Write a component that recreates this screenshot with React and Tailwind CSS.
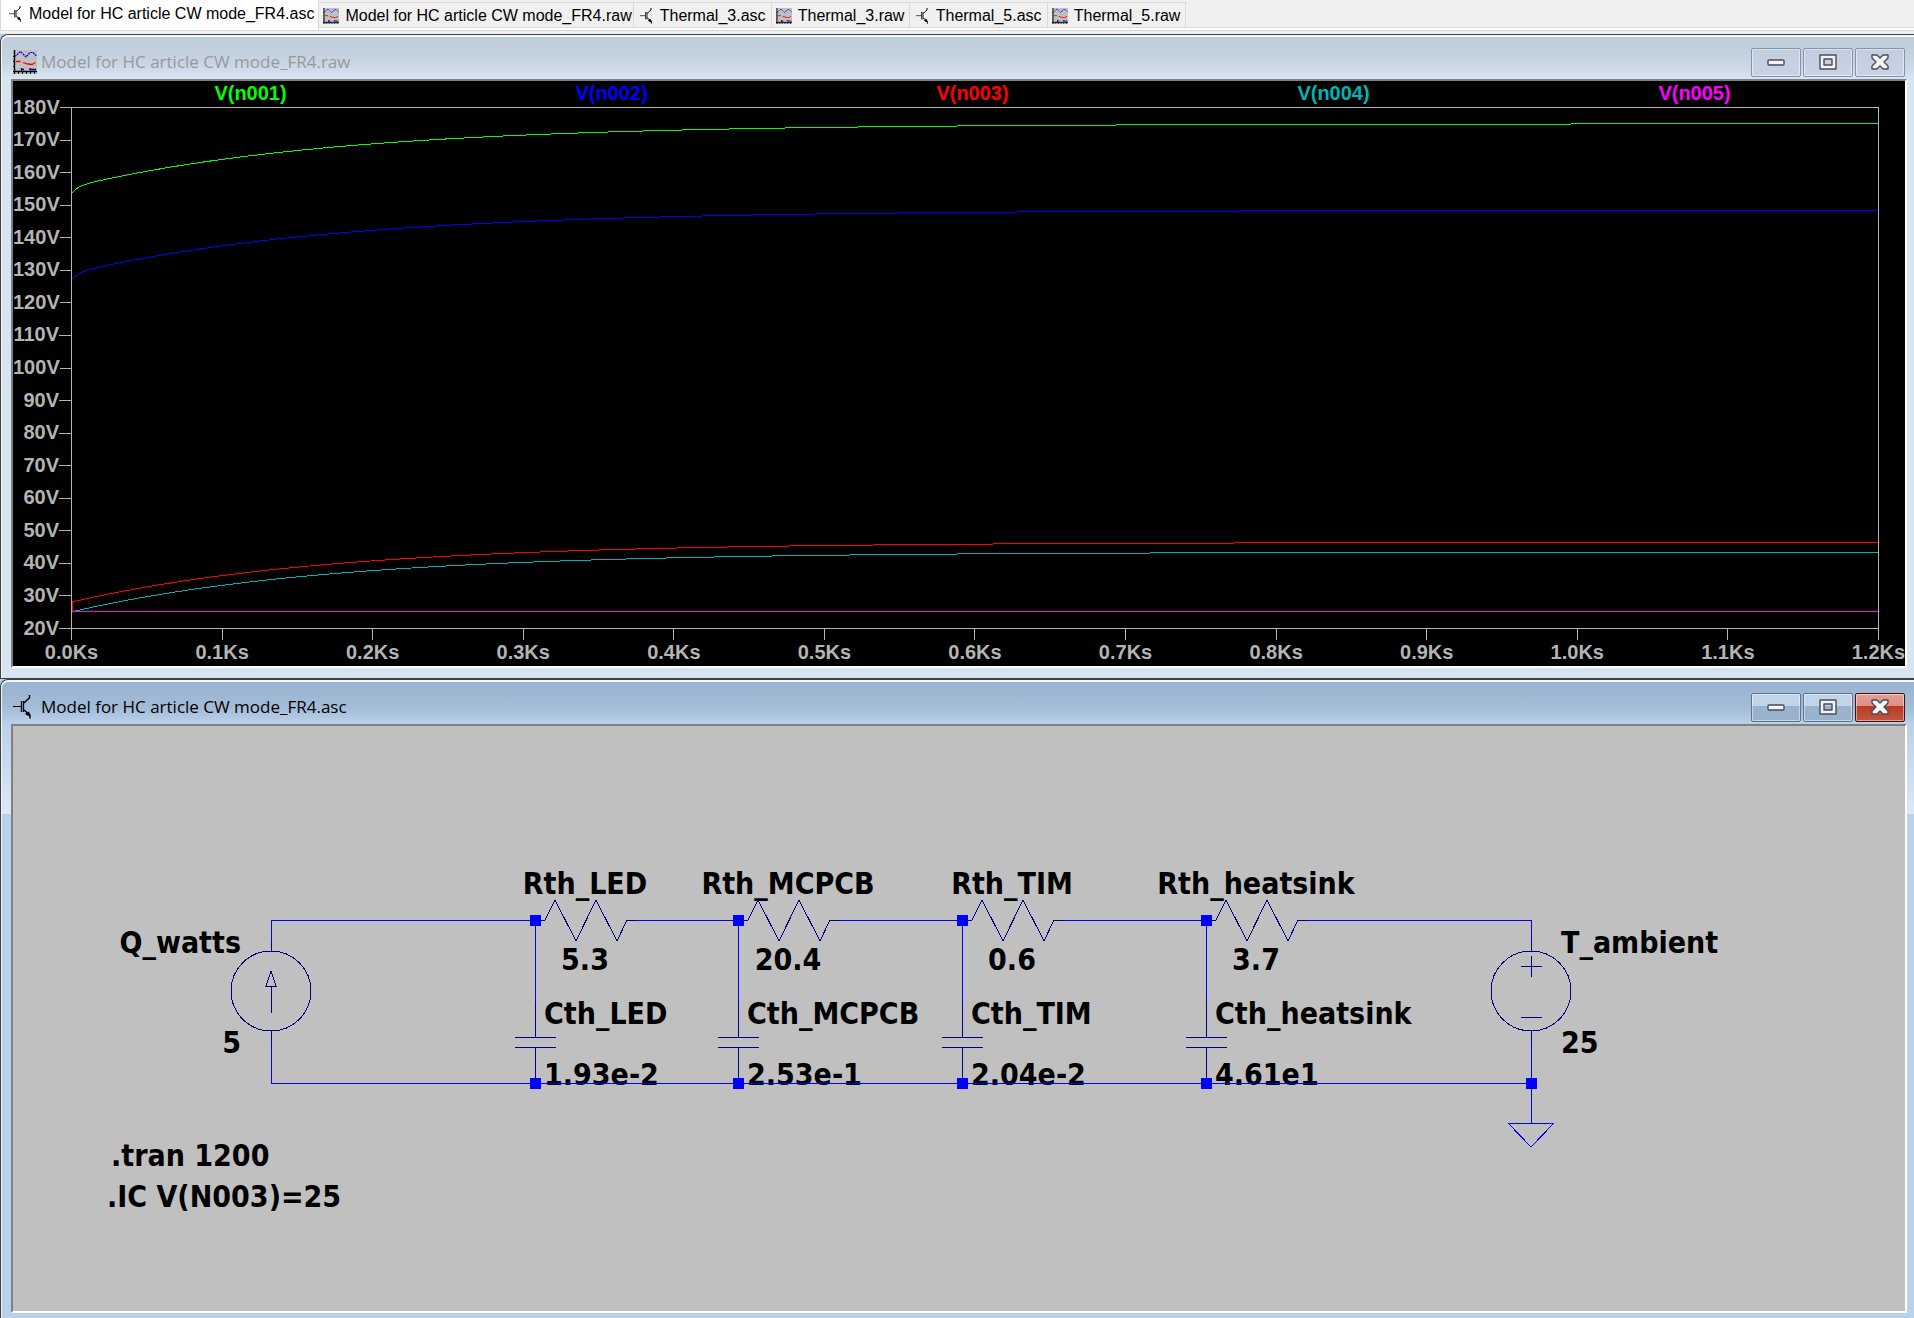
import React from "react";

const tabs = [
  { name: "Model for HC article CW mode_FR4.asc", type: "asc", active: true },
  { name: "Model for HC article CW mode_FR4.raw", type: "raw" },
  { name: "Thermal_3.asc", type: "asc" },
  { name: "Thermal_3.raw", type: "raw" },
  { name: "Thermal_5.asc", type: "asc" },
  { name: "Thermal_5.raw", type: "raw" },
];

const yTicks = [
  180, 170, 160, 150, 140, 130, 120, 110, 100, 90, 80, 70, 60, 50, 40, 30, 20,
];
const xTicks = [
  "0.0", "0.1", "0.2", "0.3", "0.4", "0.5", "0.6", "0.7", "0.8", "0.9", "1.0",
  "1.1", "1.2",
];

// node temperatures for a 5 W step into the thermal ladder
const n005 = () => 25;
const n004 = (t) => 25 + 18.35 * (1 - Math.exp(-t / 170.6));
const n003 = (t) => (t === 0 ? 25 : n004(t) + 3);
const n002 = (t) =>
  n004(t) + 105.2 - 1.8 * Math.exp(-t / 4) - 1.1 * Math.exp(-t / 250);
const n001 = (t) => n002(t) + 26.6;

const traces = [
  { name: "V(n001)", fn: n001, text: "text-[#00ff00]", stroke: "stroke-[#00ff00]" },
  { name: "V(n002)", fn: n002, text: "text-[#0000ff]", stroke: "stroke-[#0000ff]" },
  { name: "V(n003)", fn: n003, text: "text-[#ff0000]", stroke: "stroke-[#ff0000]" },
  { name: "V(n004)", fn: n004, text: "text-[#00b4b4]", stroke: "stroke-[#00b4b4]" },
  { name: "V(n005)", fn: n005, text: "text-[#ff00ff]", stroke: "stroke-[#ff00ff]" },
];

function tracePath(fn) {
  const points = [`0,${180 - fn(0)}`, `0,${180 - fn(0.01)}`];
  for (let t = 2; t <= 1200; t += 2) {
    points.push(`${t},${(180 - fn(t)).toFixed(3)}`);
  }
  return "M" + points.join("L");
}

function AscIcon({ className }) {
  return (
    <svg
      viewBox="0 0 18 24"
      className={className}
      fill="none"
      stroke="black"
      aria-hidden="true"
    >
      <path d="M0 11.5H8" />
      <path d="M8.5 6V17M10.5 6V17" strokeWidth="1.3" />
      <path d="M11 8L14 5L16.5 3V0" strokeWidth="1.5" />
      <path d="M11 15L17 20V23.5" strokeWidth="1.5" />
      <path d="M12 18.5L16 16.5L17.5 21L14 20.5Z" fill="black" stroke="none" />
    </svg>
  );
}

function RawIcon({ className }) {
  return (
    <svg viewBox="0 0 24 24" className={className} fill="none" aria-hidden="true">
      <path fill="#c0c0c0" d="M0 0H24V24H0z" />
      <path
        stroke="#0000ff"
        strokeWidth="1.2"
        strokeDasharray="2 0.7"
        d="M2 6.5L7.5 1.5L13 7L17 2.5H20L23.5 6"
      />
      <path stroke="#ff0000" strokeWidth="1.3" d="M3 11.5H7.5M10 12.5L15 14L19 14.5L22.5 12.5" />
      <path stroke="#000080" strokeWidth="1.3" d="M8 19.5H11M8.5 18V21M17 18V19.5H23" />
      <path stroke="black" strokeWidth="1.4" d="M1.5 0V24M0 21.5H24" />
      <path stroke="black" d="M0 6.5H1M0 11.5H1M0 16.5H1M5.5 22V24M9.5 22V24M13.5 22V24M17.5 22V24M21.5 22V24" />
    </svg>
  );
}

function MinimizeIcon() {
  return (
    <svg viewBox="0 0 18 16" className="h-4 w-[18px]" aria-hidden="true">
      <rect
        x="1"
        y="6"
        width="16"
        height="5"
        rx="1"
        fill="#f4f4f4"
        stroke="#484c5c"
        strokeWidth="1.4"
      />
    </svg>
  );
}

function MaximizeIcon() {
  return (
    <svg viewBox="0 0 18 16" className="h-4 w-[18px]" aria-hidden="true">
      <path
        d="M1 1H17V15H1zM5 5V11H13V5z"
        fill="#f4f4f4"
        fillRule="evenodd"
        stroke="#484c5c"
        strokeWidth="1.4"
        strokeLinejoin="round"
      />
    </svg>
  );
}

function CloseIcon() {
  return (
    <svg viewBox="0 0 18 16" className="h-4 w-[18px]" aria-hidden="true">
      <path
        d="M1 1H6L9 4L12 1H17V4L13 8L17 12V15H12L9 12L6 15H1V12L5 8L1 4z"
        fill="#f4f4f4"
        stroke="#484c5c"
        strokeWidth="1.4"
        strokeLinejoin="round"
      />
    </svg>
  );
}

function WindowButtons({ active }) {
  const base =
    "flex h-[29px] w-[50px] items-center justify-center rounded-xs border shadow-[inset_0_0_0_1px_rgba(255,255,255,0.45)]";
  const plain = active
    ? "border-[#5f7390] bg-[linear-gradient(#c0d5eb_0_45%,#9ab3cd_45%_100%)]"
    : "border-[#8593b0] bg-[linear-gradient(#c0cede,#c6d4e5)]";
  const close = active
    ? "border-[#42101c] bg-[linear-gradient(#e3a093_0%,#df8f82_45%,#b63c25_45%,#c4553c_100%)]"
    : plain;

  return (
    <div className="flex gap-0.5">
      <button aria-label="Minimize" className={`${base} ${plain}`}>
        <MinimizeIcon />
      </button>
      <button aria-label="Maximize" className={`${base} ${plain}`}>
        <MaximizeIcon />
      </button>
      <button aria-label="Close" className={`${base} ${close}`}>
        <CloseIcon />
      </button>
    </div>
  );
}

function Window({ title, icon, active, children }) {
  return (
    <section
      className={`rounded-tl-lg border-t border-l border-[#404040] ${
        active ? "bg-[#b9d1ea]" : "border-b bg-[#d7e4f2]"
      }`}
    >
      <div className="rounded-tl-lg border-t-2 border-l border-white/80">
        <header
          className={`flex h-[42px] items-center justify-between rounded-tl-md pt-2 pr-[9px] pl-[11px] ${
            active
              ? "bg-[linear-gradient(#99b4d1,#a3bbd7_60%,#b9d1ea)]"
              : "bg-[linear-gradient(#bfcddb,#c7d4e2_60%,#d7e4f2)]"
          }`}
        >
          <div className="flex items-center gap-1">
            {icon}
            <h2
              className={`font-['Open_Sans',sans-serif] text-[17px] leading-6 ${
                active ? "text-black" : "text-[#999999]"
              }`}
            >
              {title}
            </h2>
          </div>
          <WindowButtons active={active} />
        </header>
        <div
          className={`pr-[7px] pl-[9px] ${
            active
              ? "bg-[linear-gradient(#b9d1ea,#dce8f5)] bg-[length:100%_90px] bg-no-repeat pb-[5px]"
              : "pb-[10px]"
          }`}
        >
          <div className="border-2 border-t-[#808080] border-r-white border-b-white border-l-[#808080]">
            {children}
          </div>
        </div>
      </div>
    </section>
  );
}

function WaveformPlot() {
  return (
    <div className="bg-black pr-[26px] font-['Liberation_Sans',sans-serif] text-xl leading-6 font-bold text-[#b4b4b4]">
      <div className="flex pr-1 pl-[57px]">
        {traces.map((t) => (
          <div key={t.name} className={`flex-1 text-center ${t.text}`}>
            {t.name}
          </div>
        ))}
      </div>
      <div className="flex pt-0.5">
        <div className="flex h-[522px] w-[58px] flex-col justify-between">
          {yTicks.map((v) => (
            <div key={v} className="flex h-px items-center justify-end">
              <span className="pb-0.5">{v}V</span>
              <span className="h-px w-3 bg-[#b4b4b4]" />
            </div>
          ))}
        </div>
        <div className="h-[522px] flex-1 border border-[#b4b4b4]">
          <svg
            viewBox="0 0 1200 160"
            preserveAspectRatio="none"
            className="h-[520px] w-full overflow-visible"
            fill="none"
            shapeRendering="crispEdges"
            role="img"
            aria-label="Node voltages over time"
          >
            {traces.map((t) => (
              <path
                key={t.name}
                d={tracePath(t.fn)}
                className={t.stroke}
                vectorEffect="non-scaling-stroke"
              />
            ))}
          </svg>
        </div>
      </div>
      <div className="flex justify-between pb-0.5 pl-[58px]">
        {xTicks.map((v) => (
          <div key={v} className="flex w-px flex-col items-center">
            <span className="h-[11px] w-px bg-[#b4b4b4]" />
            <span>{v}Ks</span>
          </div>
        ))}
      </div>
    </div>
  );
}

const stages = [
  { name: "LED", x: 522, end: 725, r: "5.3", c: "1.93e-2" },
  { name: "MCPCB", x: 725, end: 949, r: "20.4", c: "2.53e-1" },
  { name: "TIM", x: 949, end: 1193, r: "0.6", c: "2.04e-2" },
  { name: "heatsink", x: 1193, end: 1518, r: "3.7", c: "4.61e1" },
];

function Junction({ x, y }) {
  return <rect x={x - 5} y={y - 5} width="11" height="11" fill="#0000ff" />;
}

function Stage({ name, x, end, r, c }) {
  return (
    <g>
      <g fill="black">
        <text x={x + 50} y="168" textAnchor="middle">
          Rth_{name}
        </text>
        <text x={x + 50} y="244" textAnchor="middle">
          {r}
        </text>
        <text x={x + 9} y="298">
          Cth_{name}
        </text>
        <text x={x + 9} y="359">
          {c}
        </text>
      </g>
      <g fill="none" shapeRendering="crispEdges">
        <path stroke="#0000ff" d={`M${x + 101} 194H${end}M${x} 194V276M${x} 357H${end}`} />
        <path
          stroke="#000080"
          d={`M${x} 194h10l10 -20l21 41l20 -41l21 41l10 -21h9M${x} 276v35M${x - 20} 311h41M${x - 20} 321h41M${x} 321v36`}
        />
      </g>
      <Junction x={x} y={194} />
      <Junction x={x} y={357} />
    </g>
  );
}

function Schematic() {
  return (
    <svg
      viewBox="0 0 1892 585"
      className="block w-full bg-[#c0c0c0] font-['DejaVu_Sans_Condensed','DejaVu_Sans',sans-serif] text-[30px] font-bold"
      role="img"
      aria-label="Thermal model schematic"
    >
      {/* heat source */}
      <text x="228" y="227" textAnchor="end">Q_watts</text>
      <text x="228" y="327" textAnchor="end">5</text>
      <g fill="none" shapeRendering="crispEdges">
        <path stroke="#0000ff" d="M258 216V194H522M258 315V357H522" />
        <path stroke="#000080" d="M258 216V225M258 305V315M258 287V260M253 260H263L258 245Z" />
        <circle cx="258" cy="265" r="40" stroke="#000080" />
      </g>

      {stages.map((s) => (
        <Stage key={s.name} {...s} />
      ))}

      {/* ambient source and ground */}
      <text x="1548" y="227">T_ambient</text>
      <text x="1548" y="327">25</text>
      <g fill="none" shapeRendering="crispEdges">
        <path stroke="#0000ff" d="M1518 194V216M1518 315V397M1495 397H1541L1518 421Z" />
        <path stroke="#000080" d="M1518 216V225M1518 305V315M1518 230V251M1508 240H1529M1508 291H1529" />
        <circle cx="1518" cy="265" r="40" stroke="#000080" />
      </g>
      <Junction x={1518} y={357} />

      <text x="98" y="440">.tran 1200</text>
      <text x="94" y="481">.IC V(N003)=25</text>
    </svg>
  );
}

export default function App() {
  return (
    <main className="min-h-screen overflow-hidden bg-[#b9d1ea]">
      <nav className="flex h-[34px] items-start bg-[linear-gradient(#f0f0f0_0_27px,#d9d9d9_27px_28px,#ffffff_28px_30px,#d9d9d9_30px_31px,#f0f0f0_31px)] font-['Liberation_Sans',sans-serif] text-base">
        {tabs.map((tab) => (
          <a
            key={tab.name}
            href="#"
            className={`flex items-center gap-1.5 text-black ${
              tab.active
                ? "h-[30px] border-r border-l border-[#d9d9d9] bg-white pr-1 pb-0.5 pl-1.5"
                : "mt-0.5 h-[26px] min-w-[138px] border-t border-r border-b border-[#d9d9d9] pt-0.5 pr-px pl-1"
            }`}
          >
            {tab.type === "asc" ? (
              <AscIcon className="h-4 w-4" />
            ) : (
              <RawIcon className="size-4" />
            )}
            {tab.name}
          </a>
        ))}
      </nav>
      <Window
        title="Model for HC article CW mode_FR4.raw"
        icon={<RawIcon className="size-6" />}
      >
        <WaveformPlot />
      </Window>
      <Window
        title="Model for HC article CW mode_FR4.asc"
        icon={<AscIcon className="mr-1.5 h-6 w-[18px]" />}
        active
      >
        <Schematic />
      </Window>
    </main>
  );
}
